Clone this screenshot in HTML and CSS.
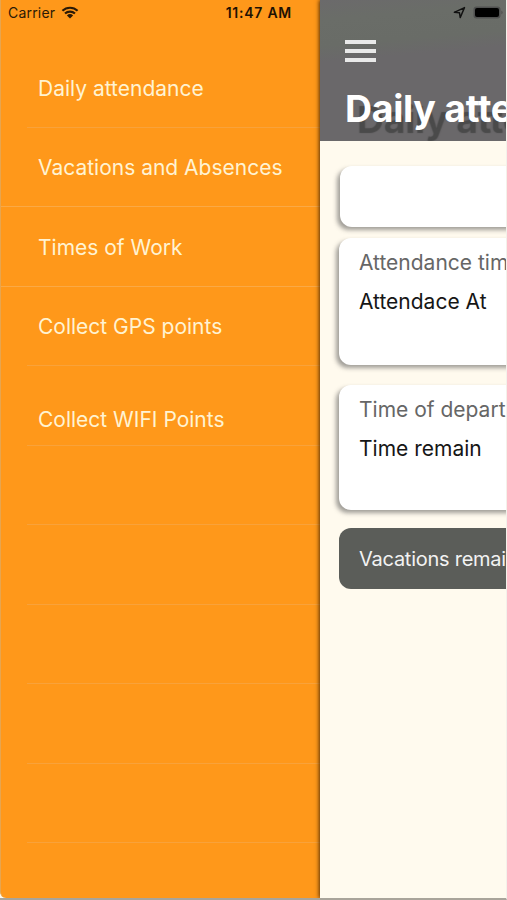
FILE: index.html
```
<!DOCTYPE html>
<html lang="en">
<head>
    <meta charset="UTF-8">
    <title>Daily attendance</title>
    <link rel="stylesheet" href="styles.css">
</head>
<body>
<div class="phone">
    <div class="menu">
        <div class="status">
            <span class="carrier">Carrier</span>
            <svg class="wifi" width="18" height="13" viewBox="0 0 18 13">
                <path d="M1.4 4.8a11 11 0 0 1 15.2 0M4 7.6a7.2 7.2 0 0 1 10 0" fill="none" stroke="#2b1a06" stroke-width="2.1"/>
                <path d="M9 12.4L5.9 9.5a4.5 4.5 0 0 1 6.2 0z" fill="#2b1a06"/>
            </svg>
            <span class="time">11:47 AM</span>
        </div>
        <ul class="list">
            <li><a href="#">Daily attendance</a></li>
            <li class="full"><a href="#">Vacations and Absences</a></li>
            <li class="full"><a href="#">Times of Work</a></li>
            <li><a href="#">Collect GPS points</a></li>
            <li class="low"><a href="#">Collect WIFI Points</a></li>
            <li></li>
            <li></li>
            <li></li>
            <li></li>
            <li></li>
        </ul>
    </div>
    <div class="main">
        <div class="header">
            <div class="icons">
                <svg width="13" height="13" viewBox="0 0 13 13">
                    <path d="M1.3 6.3L11.5 1.6L7.2 11.6L6.5 6.8z" fill="none" stroke="#111" stroke-width="1.4" stroke-linejoin="round"/>
                </svg>
                <svg width="32" height="13" viewBox="0 0 32 13">
                    <rect x="0.5" y="0.5" width="27" height="12" rx="3" fill="#505150"/>
                    <rect x="2" y="2" width="24" height="9" rx="2" fill="#000"/>
                    <path d="M28.5 4.5q2 2 0 4z" fill="#454645"/>
                </svg>
            </div>
            <a href="#" class="burger"><i></i><i></i><i></i></a>
            <h1>Daily attendance</h1>
        </div>
        <div class="content">
            <div class="card blank"></div>
            <div class="card arrive">
                <p class="label">Attendance time</p>
                <p class="value">Attendace At</p>
            </div>
            <div class="card depart">
                <p class="label">Time of departure</p>
                <p class="value">Time remain</p>
            </div>
            <div class="remain">Vacations remain</div>
        </div>
    </div>
</div>
</body>
</html>
```
FILE: styles.css
```
@charset "UTF-8";
body,h1,ul,li,p{margin:0;padding:0}
body{font:21px/26px Inter, "Liberation Sans", sans-serif;overflow:hidden;}
ul{list-style:none}
a{text-decoration:none;color:inherit}
svg{display:block}

.phone{
    display:flex;
    box-sizing:border-box;
    width:507px;
    height:900px;
    overflow:hidden;
    border-right:1px solid #f4f1ea;
    border-bottom:2px solid #a9a49a;
    background:#fffaee;
}

/*side menu*/
.menu{
    flex:none;
    box-sizing:border-box;
    width:320px;
    border-left:1px solid #e6a550;
    border-bottom-left-radius:6px;
    background:#ff981a;
}
.status{
    display:flex;
    align-items:center;
    height:24px;
    margin-bottom:24px;
    padding:0 28px 0 7px;
    font-size:14px;
    line-height:25px;
    color:#2b1a06;
}
.carrier{
    letter-spacing:.2px;
}
.wifi{
    margin-left:6px;
}
.time{
    margin-left:auto;
    font-weight:600;
    letter-spacing:.75px;
    color:#1e1203;
}
.list li{
    display:flex;
    align-items:center;
    box-sizing:border-box;
    height:79.5px;
    margin-left:26px;
    padding:3px 0 0 11px;
    border-bottom:1px solid #f9a23a;
    color:#fff3d2;
}
.list .full{
    margin-left:0;
    padding-left:37px;
    border-color:#fba945;
}
.list .low{
    padding-top:29px;
}

/*attendance page*/
.main{
    flex:1;
    min-width:0;
    z-index:1;
    background:#fffaee;
    box-shadow:-1px 0 4px rgba(60,30,0,.85);
}
.header{
    box-sizing:border-box;
    height:141px;
    padding-left:25px;
    overflow:hidden;
    background:linear-gradient(175deg,#6b6a6b 0,#6a6d68 20px,#696c67 46px,#6a686a 62px);
}
.icons{
    display:flex;
    justify-content:flex-end;
    gap:7px;
    width:160px;
    padding-top:6px;
}
.burger{
    display:flex;
    flex-direction:column;
    gap:5px;
    width:31px;
    margin-top:21px;
}
.burger i{
    height:4px;
    background:#e9e9e9;
}
h1{
    margin-top:25px;
    font-size:37.5px;
    line-height:44px;
    font-weight:700;
    letter-spacing:-.3px;
    white-space:nowrap;
    color:#fff;
    text-shadow:12px 11px 1px #4a4a4a;
}
.content{
    padding:25px 0 0 19px;
}
.card,.remain{
    box-sizing:border-box;
    width:200px;
    padding-left:20px;
    border-radius:12px;
    white-space:nowrap;
}
.card{
    background:#fff;
    box-shadow:-3px 3px 4px rgba(70,70,70,.5);
}
.blank{
    height:61px;
    margin-left:1px;
}
.arrive{
    height:127px;
    margin-top:11px;
    padding-top:12px;
}
.depart{
    height:125px;
    margin-top:20px;
    padding-top:12px;
}
.label{
    color:#666;
}
.value{
    margin-top:13px;
    color:#161616;
}
.remain{
    height:61px;
    margin-top:18px;
    font-size:20px;
    line-height:63px;
    letter-spacing:-.25px;
    color:#f2f2f2;
    background:#5b5d59;
}
```
